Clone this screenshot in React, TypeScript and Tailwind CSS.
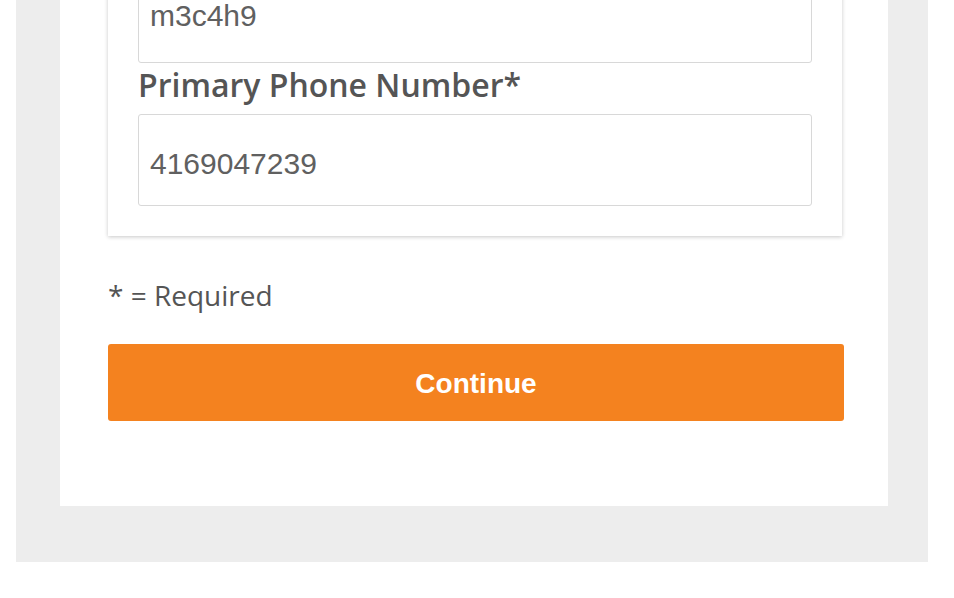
import React from "react";

export default function App() {
  return (
    <div className="w-[954px] h-[598px] overflow-hidden bg-white">
      <div className="-mt-[59px] ml-[16px] w-[912px] bg-[#ededed] pl-[44px] pr-[40px] pb-[56px]">
        <div className="bg-white px-[48px] pb-[85px]">
          <div className="bg-white px-[30px] pt-[30px] pb-[30px] shadow-[0_1px_4px_rgba(0,0,0,0.22)] w-[734px]">
            <div className="h-[92px] border border-[#d8d8d8] rounded-[3px] flex items-center pl-[11px] pb-[2px] text-[30px] leading-none text-[#606060] font-['Liberation_Sans',Arial,sans-serif]">
              m3c4h9
            </div>
            <div className="mt-[6px] mb-[13px] text-[32px] leading-[32px] font-semibold text-[#555] font-['Open_Sans',sans-serif]">
              Primary Phone Number*
            </div>
            <div className="h-[92px] border border-[#d8d8d8] rounded-[3px] flex items-center pl-[11px] pt-[7px] text-[30px] leading-none text-[#606060] font-['Liberation_Sans',Arial,sans-serif]">
              4169047239
            </div>
          </div>
          <div className="mt-[45px] text-[28px] leading-[28px] text-[#555] font-['Open_Sans',sans-serif]">
            * = Required
          </div>
          <button className="mt-[35px] w-[736px] h-[77px] rounded-[3px] bg-[#f4821f] text-white text-[28px] font-bold font-['Liberation_Sans',Arial,sans-serif] flex items-center justify-center pt-[3px]">
            Continue
          </button>
        </div>
      </div>
    </div>
  );
}
